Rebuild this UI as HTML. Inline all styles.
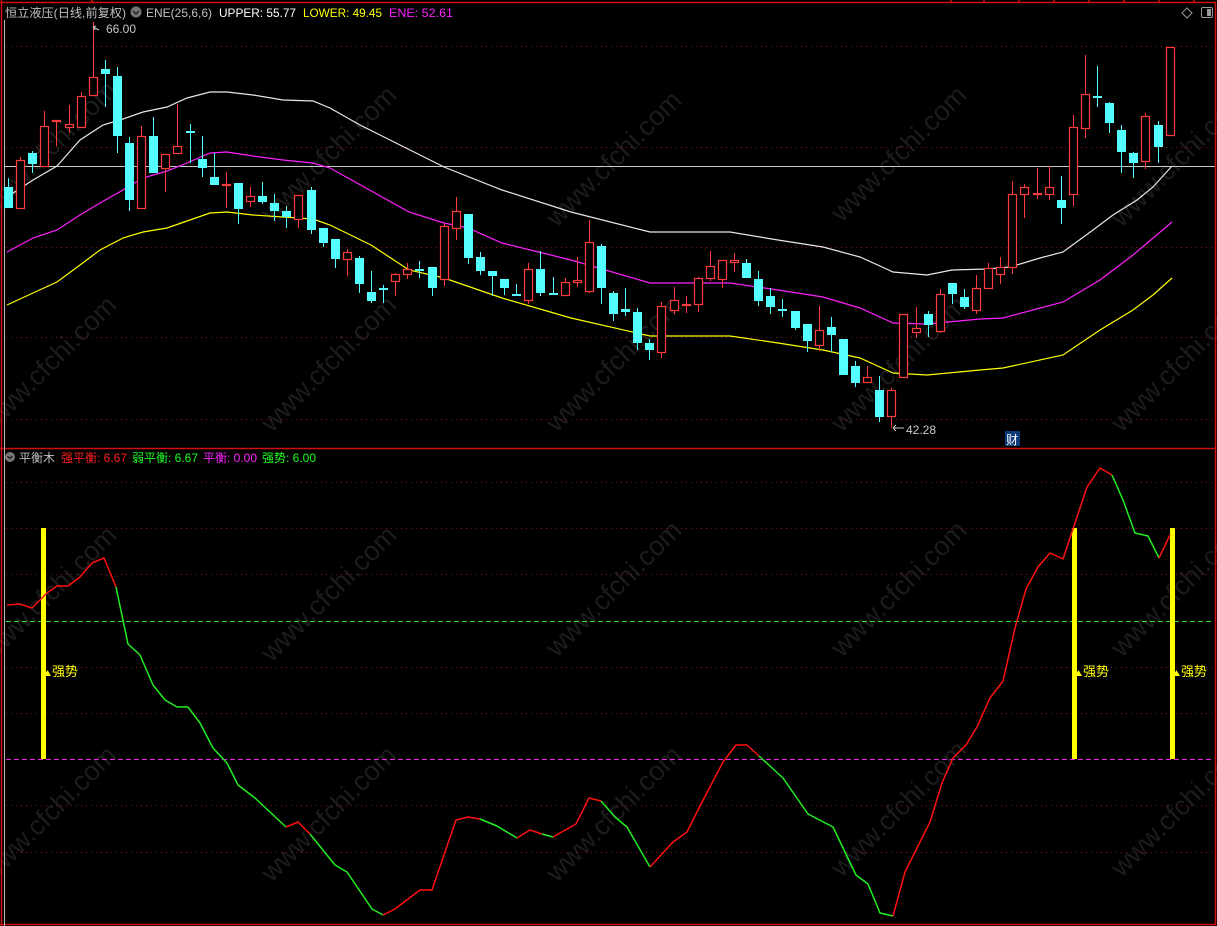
<!DOCTYPE html>
<html><head><meta charset="utf-8"><style>
html,body{margin:0;padding:0;background:#000;}
svg{display:block;}
text{font-family:"Liberation Sans","Noto Sans CJK SC",sans-serif;}
</style></head><body>
<svg width="1217" height="926" viewBox="0 0 1217 926" xmlns="http://www.w3.org/2000/svg">
<rect width="1217" height="926" fill="#000"/>
<g fill="#1c1c1c" font-size="27" font-family="Liberation Sans,sans-serif">
<text transform="translate(55,155) rotate(-45)" text-anchor="middle">www.cfchi.com</text>
<text transform="translate(335,160) rotate(-45)" text-anchor="middle">www.cfchi.com</text>
<text transform="translate(620,165) rotate(-45)" text-anchor="middle">www.cfchi.com</text>
<text transform="translate(905,160) rotate(-45)" text-anchor="middle">www.cfchi.com</text>
<text transform="translate(1185,165) rotate(-45)" text-anchor="middle">www.cfchi.com</text>
<text transform="translate(55,370) rotate(-45)" text-anchor="middle">www.cfchi.com</text>
<text transform="translate(335,370) rotate(-45)" text-anchor="middle">www.cfchi.com</text>
<text transform="translate(620,370) rotate(-45)" text-anchor="middle">www.cfchi.com</text>
<text transform="translate(905,370) rotate(-45)" text-anchor="middle">www.cfchi.com</text>
<text transform="translate(1185,370) rotate(-45)" text-anchor="middle">www.cfchi.com</text>
<text transform="translate(55,600) rotate(-45)" text-anchor="middle">www.cfchi.com</text>
<text transform="translate(335,600) rotate(-45)" text-anchor="middle">www.cfchi.com</text>
<text transform="translate(620,595) rotate(-45)" text-anchor="middle">www.cfchi.com</text>
<text transform="translate(905,595) rotate(-45)" text-anchor="middle">www.cfchi.com</text>
<text transform="translate(1185,595) rotate(-45)" text-anchor="middle">www.cfchi.com</text>
<text transform="translate(55,820) rotate(-45)" text-anchor="middle">www.cfchi.com</text>
<text transform="translate(335,820) rotate(-45)" text-anchor="middle">www.cfchi.com</text>
<text transform="translate(620,820) rotate(-45)" text-anchor="middle">www.cfchi.com</text>
<text transform="translate(905,815) rotate(-45)" text-anchor="middle">www.cfchi.com</text>
<text transform="translate(1185,815) rotate(-45)" text-anchor="middle">www.cfchi.com</text>
</g>
<g stroke="#8a1414" stroke-width="1" stroke-dasharray="1,4">
<path d="M6 46.5H1213M6 147.5H1213M6 247.5H1213M6 337.5H1213M6 419.5H1213"/>
<path d="M6 482.5H1213M6 528.5H1213M6 574.5H1213M6 667.5H1213M6 713.5H1213M6 805.5H1213M6 852.5H1213"/>
</g>
<path d="M6 621.5H1213" stroke="#22ee22" stroke-dasharray="5,3"/>
<path d="M6 759.5H1213" stroke="#ee22ee" stroke-dasharray="5,3"/>
<path d="M5 166.5H1215" stroke="#c8c8c8"/>
<g stroke="#d01010" stroke-width="1.5" fill="none">
<path d="M0 2.5H1215.5V925M1.5 0V926M0 448.5H1216M0 924.5H1216"/>
<path d="M951 0V3M984 0V3M1019 0V3M1054 0V3M1089 0V3M1124 0V3M1159 0V3M1194 0V3M92 0V3"/>
</g>
<path d="M4.5 20V926" stroke="#bbbbbb"/>
<polyline fill="none" stroke="#e8e8e8" stroke-width="1.2" points="7,197 33,180 57,166 80,140 103,125 123,119 143,112 167,107 187,98 210,92 227,92 253,95 283,100 313,101 330,108 360,125 400,145 444,167 502,190 571,212 650,232 730,232 778,240 823,247 860,257 893,272 927,275 952,270 987,269 1010,267 1040,258 1063,252 1093,230 1113,215 1137,200 1153,187 1172,166"/>
<polyline fill="none" stroke="#ff20ff" stroke-width="1.2" points="7,252 33,238 57,230 80,215 100,203 123,190 143,178 167,171 187,163 210,153 227,152 253,156 283,160 313,163 330,168 409,212 444,223 468,228 502,243 571,260 650,283 730,283 778,290 823,297 860,308 893,323 927,324 980,319 1003,318 1063,302 1100,280 1133,255 1172,222"/>
<polyline fill="none" stroke="#ffff00" stroke-width="1.2" points="7,305 33,293 57,282 80,265 100,250 123,238 143,232 167,228 187,221 210,213 227,212 253,215 283,217 313,219 330,225 371,245 409,270 444,278 502,298 571,318 650,336 730,336 778,343 823,350 860,358 893,373 927,375 980,370 1003,368 1063,355 1100,330 1133,310 1153,295 1172,278"/>
<path stroke="#54ffff" stroke-width="1" fill="none" d="M8.5 178V208M32.5 151V173M105.5 60V107M117.5 67V153M129.5 137V211M153.5 117V173M190.5 124V163M202.5 136V177M214.5 153V185M238.5 183V224M262.5 182V204M274.5 194V221M286.5 206V228M311.5 187V234M323.5 228V247M335.5 239V268M359.5 256V293M371.5 271V303M383.5 285V303M419.5 261V278M432.5 267V296M468.5 214V264M480.5 252V275M492.5 271V296M504.5 279V295M516.5 284V296M540.5 251V296M553.5 277V295M601.5 244V304M613.5 291V321M625.5 288V316M637.5 308V350M649.5 339V360M746.5 259V278M758.5 271V306M770.5 288V314M782.5 299V317M795.5 311V330M807.5 324V352M831.5 317V352M843.5 339V375M855.5 361V387M879.5 376V422M928.5 311V337M952.5 283V304M964.5 289V309M1061.5 176V224M1097.5 66V107M1109.5 102V133M1121.5 125V173M1133.5 152V178M1158.5 121V163"/>
<g fill="#54ffff">
<rect x="4" y="187" width="9" height="21"/><rect x="28" y="153" width="9" height="11"/><rect x="101" y="69" width="9" height="5"/><rect x="113" y="76" width="9" height="60"/><rect x="125" y="143" width="9" height="57"/><rect x="149" y="136" width="9" height="37"/><rect x="186" y="131" width="9" height="2"/><rect x="198" y="159" width="9" height="9"/><rect x="210" y="177" width="9" height="8"/><rect x="234" y="183" width="9" height="26"/><rect x="258" y="196" width="9" height="6"/><rect x="270" y="203" width="9" height="8"/><rect x="282" y="211" width="9" height="6"/><rect x="307" y="190" width="9" height="40"/><rect x="319" y="228" width="9" height="15"/><rect x="331" y="239" width="9" height="20"/><rect x="355" y="258" width="9" height="26"/><rect x="367" y="292" width="9" height="9"/><rect x="379" y="288" width="9" height="2"/><rect x="415" y="269" width="9" height="2"/><rect x="428" y="267" width="9" height="21"/><rect x="464" y="214" width="9" height="44"/><rect x="476" y="257" width="9" height="14"/><rect x="488" y="271" width="9" height="5"/><rect x="500" y="279" width="9" height="9"/><rect x="512" y="294" width="9" height="2"/><rect x="536" y="269" width="9" height="24"/><rect x="549" y="293" width="9" height="2"/><rect x="597" y="246" width="9" height="42"/><rect x="609" y="293" width="9" height="21"/><rect x="621" y="309" width="9" height="3"/><rect x="633" y="312" width="9" height="31"/><rect x="645" y="343" width="9" height="7"/><rect x="742" y="263" width="9" height="15"/><rect x="754" y="279" width="9" height="22"/><rect x="766" y="296" width="9" height="11"/><rect x="778" y="309" width="9" height="2"/><rect x="791" y="311" width="9" height="17"/><rect x="803" y="324" width="9" height="17"/><rect x="827" y="327" width="9" height="8"/><rect x="839" y="339" width="9" height="36"/><rect x="851" y="366" width="9" height="17"/><rect x="875" y="390" width="9" height="27"/><rect x="924" y="314" width="9" height="11"/><rect x="948" y="283" width="9" height="11"/><rect x="960" y="297" width="9" height="10"/><rect x="1057" y="200" width="9" height="8"/><rect x="1093" y="96" width="9" height="2"/><rect x="1105" y="103" width="9" height="20"/><rect x="1117" y="130" width="9" height="22"/><rect x="1129" y="153" width="9" height="10"/><rect x="1154" y="125" width="9" height="22"/>
</g>
<path stroke="#ff3b3b" stroke-width="1" fill="none" d="M20.5 157V208M44.5 111V166M56.5 120V146M69.5 105V133M81.5 92V128M93.5 22V95M141.5 126V208M165.5 154V192M177.5 104V153M226.5 172V208M250.5 187V207M298.5 195V228M347.5 249V276M395.5 273V296M407.5 263V279M444.5 224V286M456.5 197V240M528.5 263V304M565.5 278V295M577.5 257V287M589.5 220V293M661.5 302V358M674.5 287V314M686.5 296V313M698.5 277V312M710.5 251V281M722.5 260V288M734.5 253V272M819.5 306V351M867.5 366V382M891.5 388V428M903.5 314V377M916.5 307V338M940.5 289V333M976.5 275V314M988.5 263V288M1000.5 257V284M1012.5 181V274M1024.5 184V218M1037.5 168V199M1049.5 166V200M1073.5 115V206M1085.5 55V138M1145.5 113V169M1170.5 47V135"/>
<g stroke="#ff3b3b" stroke-width="1.2" fill="#000">
<rect x="16.5" y="160.5" width="8" height="48"/><rect x="40.5" y="126.5" width="8" height="40"/><rect x="52.5" y="120.5" width="8" height="1"/><rect x="65.5" y="124.5" width="8" height="3"/><rect x="77.5" y="96.5" width="8" height="31"/><rect x="89.5" y="77.5" width="8" height="18"/><rect x="137.5" y="136.5" width="8" height="72"/><rect x="161.5" y="154.5" width="8" height="14"/><rect x="173.5" y="146.5" width="8" height="7"/><rect x="222.5" y="184.5" width="8" height="1"/><rect x="246.5" y="196.5" width="8" height="5"/><rect x="294.5" y="195.5" width="8" height="24"/><rect x="343.5" y="252.5" width="8" height="7"/><rect x="391.5" y="274.5" width="8" height="7"/><rect x="403.5" y="269.5" width="8" height="5"/><rect x="440.5" y="226.5" width="8" height="53"/><rect x="452.5" y="211.5" width="8" height="17"/><rect x="524.5" y="269.5" width="8" height="31"/><rect x="561.5" y="282.5" width="8" height="13"/><rect x="573.5" y="280.5" width="8" height="2"/><rect x="585.5" y="242.5" width="8" height="49"/><rect x="657.5" y="306.5" width="8" height="46"/><rect x="670.5" y="300.5" width="8" height="10"/><rect x="682.5" y="304.5" width="8" height="1"/><rect x="694.5" y="278.5" width="8" height="26"/><rect x="706.5" y="266.5" width="8" height="12"/><rect x="718.5" y="260.5" width="8" height="19"/><rect x="730.5" y="260.5" width="8" height="2"/><rect x="815.5" y="330.5" width="8" height="15"/><rect x="863.5" y="377.5" width="8" height="5"/><rect x="887.5" y="390.5" width="8" height="26"/><rect x="899.5" y="314.5" width="8" height="63"/><rect x="912.5" y="328.5" width="8" height="4"/><rect x="936.5" y="294.5" width="8" height="37"/><rect x="972.5" y="288.5" width="8" height="22"/><rect x="984.5" y="268.5" width="8" height="20"/><rect x="996.5" y="267.5" width="8" height="7"/><rect x="1008.5" y="194.5" width="8" height="73"/><rect x="1020.5" y="187.5" width="8" height="7"/><rect x="1033.5" y="193.5" width="8" height="1"/><rect x="1045.5" y="187.5" width="8" height="7"/><rect x="1069.5" y="127.5" width="8" height="67"/><rect x="1081.5" y="94.5" width="8" height="34"/><rect x="1141.5" y="116.5" width="8" height="45"/><rect x="1166.5" y="47.5" width="8" height="88"/>
</g>
<g font-size="12" fill="#c8c8c8">
<path d="M93 27L99 30M93 27l3 -1M93 27l2 3" stroke="#c8c8c8" fill="none"/>
<text x="106" y="33">66.00</text>
<path d="M893 428H904M893 428l3 -3M893 428l3 3" stroke="#c8c8c8" fill="none"/>
<text x="906" y="434">42.28</text>
</g>
<rect x="1005" y="431" width="15" height="15" fill="#0c3a78"/>
<text x="1006" y="444" font-size="12" fill="#fff">财</text>
<g font-size="12">
<text x="5" y="17" fill="#c0c0c0" textLength="121" lengthAdjust="spacingAndGlyphs">恒立液压(日线,前复权)</text>
<circle cx="136" cy="12" r="5.5" fill="#777"/><path d="M133 11l3 3 3-3" stroke="#222" stroke-width="1.5" fill="none"/>
<text x="146" y="17" fill="#c0c0c0" textLength="66" lengthAdjust="spacingAndGlyphs">ENE(25,6,6)</text>
<text x="219" y="17" fill="#ffffff" textLength="77" lengthAdjust="spacingAndGlyphs">UPPER: 55.77</text>
<text x="303" y="17" fill="#ffff00" textLength="79" lengthAdjust="spacingAndGlyphs">LOWER: 49.45</text>
<text x="389" y="17" fill="#ff20ff" textLength="64" lengthAdjust="spacingAndGlyphs">ENE: 52.61</text>
</g>
<path d="M1187 8l5 5-5 5-5-5z" stroke="#999" fill="none"/>
<rect x="1201.5" y="7.5" width="11" height="10" rx="1.5" stroke="#999" fill="none"/><rect x="1207" y="9" width="4" height="7" fill="#999"/>
<g font-size="12">
<circle cx="10" cy="457" r="5" fill="#777"/><path d="M7.5 456l2.5 2.5 2.5-2.5" stroke="#222" stroke-width="1.4" fill="none"/>
<text x="19" y="462" fill="#c0c0c0">平衡木</text>
<text x="61" y="462" fill="#ff2020">强平衡: 6.67</text>
<text x="132" y="462" fill="#20ff20">弱平衡: 6.67</text>
<text x="203" y="462" fill="#ff20ff">平衡: 0.00</text>
<text x="262" y="462" fill="#20ff20">强势: 6.00</text>
</g>
<g fill="#ffff00">
<rect x="41" y="528" width="5" height="231"/>
<rect x="1072" y="528" width="5" height="231"/>
<rect x="1170" y="528" width="5" height="231"/>
<path d="M44 676l3.5-6 3.5 6z"/><path d="M1075 676l3.5-6 3.5 6z"/><path d="M1173 676l3.5-6 3.5 6z"/>
</g>
<g fill="#ffff00" font-size="13">
<text x="52" y="676">强势</text>
<text x="1083" y="676">强势</text>
<text x="1181" y="676">强势</text>
</g>
<g fill="none" stroke-width="1.5" stroke-linejoin="round">
<polyline stroke="#ff1010" points="7,605 20,604 32,608 47,593 57,586 68,586 80,577 92,563 104,558 116,587"/>
<polyline stroke="#20ee20" points="116,587 128,644 140,655 153,685 165,700 177,707 188,707 200,723 213,748 227,763 238,785 255,798 286,827"/>
<polyline stroke="#ff1010" points="286,827 298,822 310,834"/>
<polyline stroke="#20ee20" points="310,834 335,865 347,872 372,909 383,915"/>
<polyline stroke="#ff1010" points="383,915 395,909 420,890 432,890 456,820 468,817 480,819"/>
<polyline stroke="#20ee20" points="480,819 497,826 517,838"/>
<polyline stroke="#ff1010" points="517,838 530,830 542,834"/>
<polyline stroke="#20ee20" points="542,834 553,837"/>
<polyline stroke="#ff1010" points="553,837 576,824 589,798 601,801"/>
<polyline stroke="#20ee20" points="601,801 615,817 627,827 650,867"/>
<polyline stroke="#ff1010" points="650,867 673,842 687,832 700,806 723,762 736,745 747,745 759,756"/>
<polyline stroke="#20ee20" points="759,756 783,778 808,814 833,827 856,875 868,884 880,913 893,916"/>
<polyline stroke="#ff1010" points="893,916 905,872 930,822 942,783 953,758 966,745 977,727 990,698 1003,681 1015,628 1026,589 1038,567 1050,553 1063,559 1075,523 1087,487 1100,468 1112,475"/>
<polyline stroke="#20ee20" points="1112,475 1123,500 1135,533 1148,536 1159,558"/>
<polyline stroke="#ff1010" points="1159,558 1170,535"/>
</g>
</svg>
</body></html>
